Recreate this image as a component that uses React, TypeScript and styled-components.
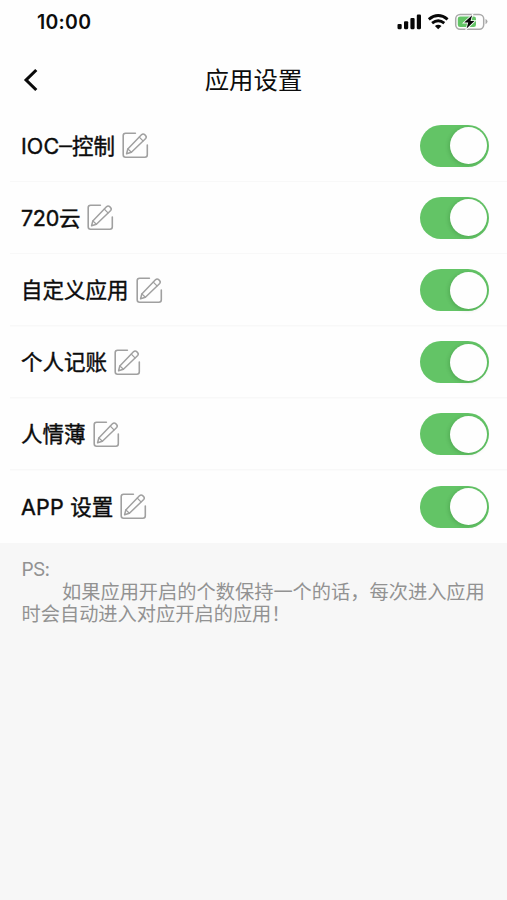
import React, { useState } from "react";
import styled, { createGlobalStyle } from "styled-components";

const GlobalStyle = createGlobalStyle`
  * { box-sizing: border-box; }
  body {
    margin: 0;
    background: #f7f7f7;
    font-family: Inter, "Noto Sans CJK SC", sans-serif;
    color: #0c0c0c;
  }
`;

const Screen = styled.div`
  width: 507px;
  height: 900px;
  overflow: hidden;
  background: #f7f7f7;
`;

const StatusBar = styled.header`
  display: flex;
  align-items: center;
  justify-content: space-between;
  height: 44px;
  padding: 0 18px 0 37px;
  background: #fefefe;
`;

const Clock = styled.span`
  font-size: 19.4px;
  font-weight: 600;
  line-height: 44px;
  letter-spacing: 0.3px;
`;

const StatusIcons = styled.svg`
  display: block;
  width: 92px;
  height: 22px;
`;

const NavBar = styled.nav`
  display: grid;
  grid-template-columns: 60px 1fr 60px;
  align-items: center;
  height: 66px;
  padding-top: 5px;
  background: #fefefe;
`;

const BackButton = styled.button`
  display: flex;
  padding: 0 0 0 21.5px;
  border: 0;
  background: none;
  color: #0a0a0a;
`;

const Title = styled.h1`
  margin: 0;
  font-size: 24.4px;
  font-weight: 400;
  line-height: 36px;
  text-align: center;
`;

const List = styled.ul`
  margin: 0;
  padding: 0;
  list-style: none;
  background: #fefefe;
`;

const Row = styled.li`
  display: flex;
  align-items: center;
  height: 72.2px;
  padding: 0 18px 0.8px 21px;
  background: linear-gradient(#f8f8f8, #f8f8f8) 10px 100% / 100% 1.5px no-repeat;
  &:last-child { background: none; }
`;

const AppName = styled.span`
  font-size: 21.5px;
  font-weight: 400;
  line-height: 32px;
  white-space: pre;
  -webkit-text-stroke: 0.4px #0c0c0c;
`;

const Latin = styled.span<{ $spacing: number }>`
  letter-spacing: ${(p) => p.$spacing}px;
`;

const Dash = styled.span`
  font-family: "Liberation Sans", sans-serif;
  font-size: 23px;
  line-height: 1;
  vertical-align: 2px;
`;

const EditButton = styled.button`
  display: flex;
  margin-left: 7px;
  padding: 0;
  border: 0;
  background: none;
`;

const Switch = styled.button<{ $on: boolean }>`
  display: flex;
  justify-content: ${(p) => (p.$on ? "flex-end" : "flex-start")};
  align-items: center;
  width: 69px;
  height: 42px;
  margin-left: auto;
  padding: 0 2.5px;
  border: 0;
  border-radius: 21px;
  background: ${(p) => (p.$on ? "#63c466" : "#e4e4e6")};
`;

const Knob = styled.span`
  width: 37px;
  height: 37px;
  border-radius: 50%;
  background: #fefefe;
  box-shadow: -1px 1px 4px rgba(0, 60, 0, 0.2);
`;

const Note = styled.section`
  padding: 15px 20px 0 21.5px;
  color: #929292;
  font-size: 19.23px;
  line-height: 22.4px;
`;

const NoteHeading = styled.div`
  letter-spacing: -0.8px;
`;

const NoteText = styled.p`
  margin: 0;
  text-indent: 40.5px;
  white-space: nowrap;
`;

function PencilSquare() {
  return (
    <svg width="27" height="27" viewBox="0 0 27 27" fill="none" stroke="#a0a0a0" strokeWidth="1.6" strokeLinecap="round" strokeLinejoin="round">
      <path d="M13.4 1.2H3.6Q1.2 1.2 1.2 3.6v19.2q0 2.4 2.4 2.4h19.3q2.4 0 2.4-2.4V13" />
      <path strokeWidth="1.5" d="M5.8 16.9 19.7 2.6q1.5-1.3 3.5.5 1.9 1.8.5 3.4L9.4 20.3 4.6 21.7Z" />
      <path strokeWidth="1.3" d="M5.8 16.9 9.4 20.3M17.3 5.1l3.7 3.8" />
    </svg>
  );
}

type AppItem = { latin?: string; spacing?: number; dash?: boolean; name: string };

const apps: AppItem[] = [
  { latin: "IOC", spacing: 0.1, dash: true, name: "控制" },
  { latin: "720", spacing: -0.3, name: "云" },
  { name: "自定义应用" },
  { name: "个人记账" },
  { name: "人情薄" },
  { latin: "APP ", spacing: 0.2, name: "设置" },
];

function AppRow({ item }: { item: AppItem }) {
  const [on, setOn] = useState(true);
  return (
    <Row>
      <AppName>
        {item.latin && <Latin $spacing={item.spacing ?? 0}>{item.latin}</Latin>}
        {item.dash && <Dash>–</Dash>}
        {item.name}
      </AppName>
      <EditButton aria-label="编辑"><PencilSquare /></EditButton>
      <Switch $on={on} role="switch" aria-checked={on} onClick={() => setOn(!on)}>
        <Knob />
      </Switch>
    </Row>
  );
}

export default function App() {
  return (
    <Screen>
      <GlobalStyle />
      <StatusBar>
        <Clock>10:00</Clock>
        <StatusIcons viewBox="0 0 92 22" fill="none">
          <g fill="#080808">
            <rect x="0.5" y="13" width="4.2" height="5.2" rx="1.1" />
            <rect x="7" y="10.2" width="4.2" height="8" rx="1.1" />
            <rect x="13.4" y="7" width="4.2" height="11.2" rx="1.1" />
            <rect x="19.8" y="3.6" width="4.2" height="14.6" rx="1.1" />
          </g>
          <g stroke="#080808" strokeWidth="2.9">
            <path d="M31.8 8.4q9.4-7.6 18.8 0" />
            <path d="M35.1 12.2q6.1-4.8 12.2 0" />
          </g>
          <path d="M37.9 14.9q3.3-2.4 6.6 0L41.2 18.3Z" fill="#080808" />
          <rect x="58.7" y="3.4" width="28" height="14.8" rx="4.4" stroke="#a9a9a9" strokeWidth="1.5" />
          <path d="M88.5 8v5.2q2-.8 2-2.6T88.5 8Z" fill="#a9a9a9" />
          <rect x="60.8" y="5.5" width="18.2" height="10.6" rx="2.3" fill="#63c466" />
          <path d="M75.1 4.3 67.2 11.6H71.2l-1.6 6 7.9-7.6h-4Z" fill="#080808" stroke="#fefefe" strokeWidth="1.7" paintOrder="stroke" />
        </StatusIcons>
      </StatusBar>
      <NavBar>
        <BackButton aria-label="返回">
          <svg width="18" height="26" viewBox="0 0 18 26" fill="none" stroke="currentColor" strokeWidth="3.1">
            <path d="M14.3 3 4.1 13 14.3 23" />
          </svg>
        </BackButton>
        <Title>应用设置</Title>
      </NavBar>
      <List>
        {apps.map((item) => <AppRow key={item.name} item={item} />)}
      </List>
      <Note>
        <NoteHeading>PS:</NoteHeading>
        <NoteText>
          如果应用开启的个数保持一个的话，每次进入应用<br />
          时会自动进入对应开启的应用！
        </NoteText>
      </Note>
    </Screen>
  );
}
